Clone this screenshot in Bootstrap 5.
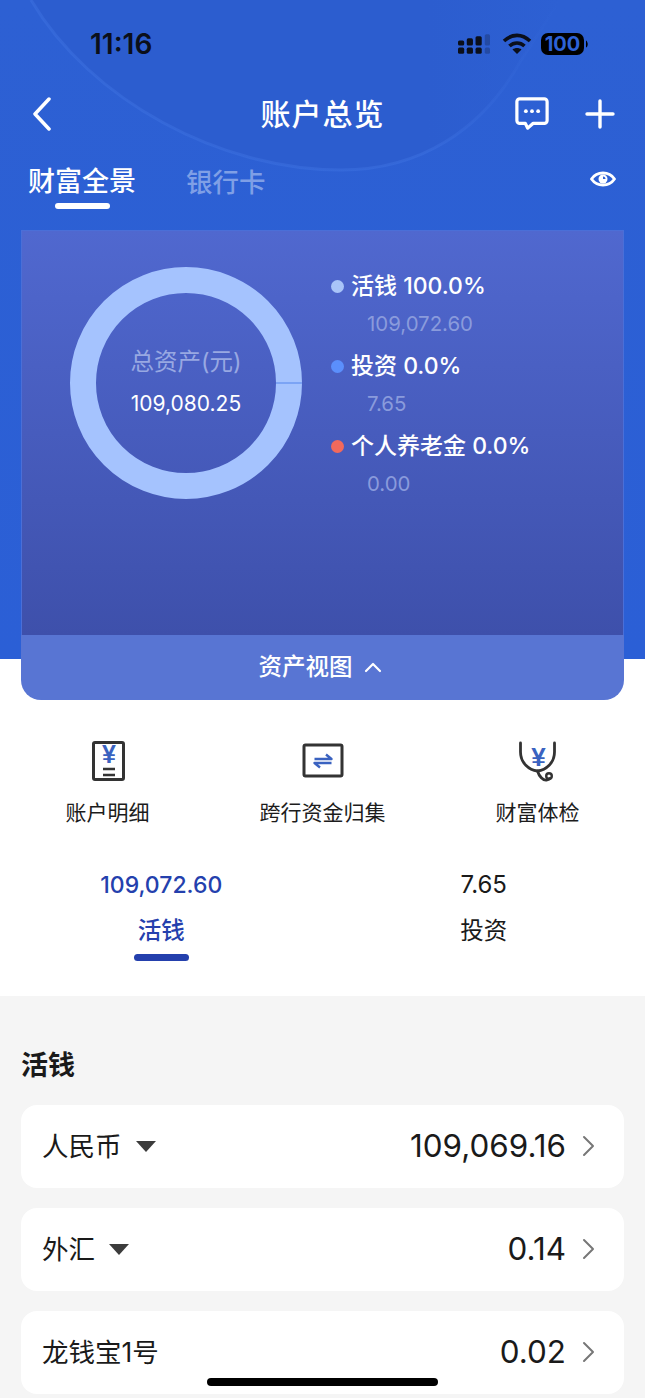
<!DOCTYPE html>
<html lang="zh-CN">
<head>
    <meta charset="UTF-8">
    <meta name="viewport" content="width=device-width, initial-scale=1.0">
    <title>账户总览</title>
    <link href="https://cdn.jsdelivr.net/npm/bootstrap@5.3.0/dist/css/bootstrap.min.css" rel="stylesheet">
    <style>
        body {
            background-color: #f5f5f5;
            font-family: Inter, "Noto Sans CJK SC", sans-serif;
            color: #1a1a1a;
        }
        .phone {
            width: 645px;
            height: 1398px;
            overflow: hidden;
        }
        .hero {
            height: 659px;
            background: linear-gradient(180deg, #2d60d3 0%, #2b5fd6 100%);
        }
        .hero-curve {
            position: absolute;
            left: 0;
            top: 0;
        }
        .status-line {
            height: 88px;
            padding: 0 56px 0 90px;
        }
        .clock {
            font-size: 28px;
            font-weight: 600;
            color: #0b0f1a;
        }
        .wifi-mark {
            margin-left: 10px;
        }
        .top-bar {
            height: 52px;
            padding: 0 30px 0 33px;
        }
        .top-title {
            font-size: 30px;
            font-weight: 500;
            letter-spacing: 1px;
            color: #fff;
        }
        .top-bar-center {
            left: 0;
            right: 0;
            top: 0;
            bottom: 0;
            position: absolute;
        }
        .plus-mark {
            margin-left: 36px;
        }
        .tab-line {
            height: 90px;
            padding: 0 29px 0 28px;
        }
        .tab-on {
            font-size: 27px;
            font-weight: 500;
            line-height: 40px;
            color: #fff;
        }
        .tab-on::after {
            content: "";
            display: block;
            width: 55px;
            height: 6px;
            margin: 1px auto 0;
            background: #fff;
            border-radius: 3px;
        }
        .tab-off {
            font-size: 26.5px;
            font-weight: 500;
            line-height: 40px;
            margin-left: 50px;
            color: #7f9fe6;
        }
        .tab-holder {
            margin-top: 22px;
        }
        .eye-holder {
            margin-top: 28px;
        }
        .wealth-panel {
            margin: 0 21px;
            height: 470px;
            border-radius: 0 0 20px 20px;
            overflow: hidden;
        }
        .wealth-body {
            height: 405px;
            padding: 36px 0 0 48px;
            background: linear-gradient(180deg, #5068cf 0%, #3e50ab 100%);
            border: 1px solid #4a6fd8;
            border-bottom: 0;
        }
        .wealth-foot {
            height: 65px;
            padding: 0 5px 2px 0;
            background: #5875d3;
            color: #fff;
            font-size: 23.5px;
            font-weight: 500;
        }
        .foot-arrow {
            margin-left: 11px;
        }
        .donut {
            width: 232px;
            height: 232px;
        }
        .donut-label {
            position: absolute;
            left: 0;
            right: 0;
            top: 77px;
            text-align: center;
        }
        .donut-name {
            font-size: 23.5px;
            line-height: 36px;
            color: #98a8e2;
        }
        .donut-sum {
            font-size: 21px;
            line-height: 40px;
            margin-top: 4px;
            color: #fff;
        }
        .share-list {
            margin-top: 1px;
            margin-left: 29px;
        }
        .share-row {
            font-size: 23px;
            line-height: 36px;
            color: #fff;
            font-weight: 500;
        }
        .share-dot {
            width: 13px;
            height: 13px;
            border-radius: 50%;
            margin-right: 7px;
        }
        .share-sum {
            font-size: 20.4px;
            line-height: 39px;
            margin: 0 0 5px 36px;
            color: #8a9bdc;
        }
        .white-zone {
            height: 337px;
            padding-top: 78px;
            background: #fff;
        }
        .tool-ico {
            height: 48px;
        }
        .tool-name {
            font-size: 21px;
            line-height: 32px;
            margin-top: 12px;
            color: #1c1c1c;
        }
        .sub-tabs {
            margin-top: 38px;
        }
        .sub-sum {
            font-size: 24px;
            line-height: 36px;
        }
        .sub-name {
            font-size: 23.5px;
            line-height: 36px;
            margin-top: 10px;
        }
        .sub-on {
            color: #2440ad;
            font-weight: 500;
        }
        .sub-on .sub-sum {
            font-size: 23px;
        }
        .sub-on .sub-name::after {
            content: "";
            display: block;
            width: 55px;
            height: 7px;
            margin: 5px auto 0;
            background: #2440ad;
            border-radius: 4px;
        }
        .grey-zone {
            padding: 50px 21px 0;
        }
        .zone-title {
            font-size: 27px;
            font-weight: 700;
            line-height: 40px;
            margin-bottom: 19px;
        }
        .money-row {
            height: 83px;
            padding: 0 28px 0 21px;
            margin-bottom: 20px;
            border: 0;
            border-radius: 16px;
        }
        .money-name {
            font-size: 26.5px;
        }
        .money-sum {
            font-size: 31.4px;
            color: #1a1a1a;
            margin-right: 16px;
        }
        .caret-down {
            width: 0;
            height: 0;
            margin-left: 14px;
            border-left: 10px solid transparent;
            border-right: 10px solid transparent;
            border-top: 11px solid #3c3c3c;
        }
        .home-pill {
            position: absolute;
            left: 207px;
            top: 1378px;
            width: 231px;
            height: 8px;
            background: #000;
            border-radius: 4px;
        }
    </style>
</head>
<body>

<div class="phone position-relative">

    <div class="hero position-relative">
        <svg class="hero-curve" width="645" height="230" viewBox="0 0 645 230">
            <defs>
                <linearGradient id="curveFill" x1="0" y1="0" x2="1" y2="0">
                    <stop offset="0.75" stop-color="#2c5dcf"/>
                    <stop offset="1" stop-color="#2c5dcf" stop-opacity="0"/>
                </linearGradient>
                <linearGradient id="curveEdge" x1="0" y1="0" x2="1" y2="0">
                    <stop offset="0.75" stop-color="#3f73e2" stop-opacity=".45"/>
                    <stop offset="1" stop-color="#3f73e2" stop-opacity="0"/>
                </linearGradient>
            </defs>
            <path d="M31 0C90 100 220 170 341 170C420 170 482 130 520 62L560 0Z" fill="url(#curveFill)"/>
            <path d="M31 0C90 100 220 170 341 170C420 170 482 130 520 62L560 0" fill="none" stroke="url(#curveEdge)" stroke-width="3"/>
        </svg>

        <div class="status-line d-flex align-items-center justify-content-between position-relative">
            <span class="clock">11:16</span>
            <div class="d-flex align-items-center">
                <svg width="33" height="20" viewBox="0 0 32 19" fill="#0b0f1a">
                    <rect x="0" y="6" width="6" height="5" rx="1.5"/><rect x="0" y="13" width="6" height="6" rx="1.5"/>
                    <rect x="8.500" y="4" width="6" height="7" rx="1.500"/><rect x="8.500" y="13" width="6" height="6" rx="1.500"/>
                    <rect x="17" y="2" width="6" height="9" rx="1.500"/><rect x="17" y="13" width="6" height="6" rx="1.500"/>
                    <rect x="26" y="0" width="5" height="11" rx="1.500" opacity=".25"/><rect x="26" y="13" width="5" height="6" rx="1.500" opacity=".25"/>
                </svg>
                <svg class="wifi-mark" width="32" height="22" viewBox="0 0 32 22" fill="none" stroke="#0b0f1a" stroke-width="3.600">
                    <path d="M3 8C11 0.500 21 0.500 29 8"/>
                    <path d="M8.500 13C13 9 19 9 23.500 13"/>
                    <path d="M16 21L11.500 16.500C14 14.500 18 14.500 20.500 16.500Z" fill="#0b0f1a" stroke="none"/>
                </svg>
                <svg class="ms-2" width="48" height="22" viewBox="0 0 48 22">
                    <rect width="43" height="22" rx="7" fill="#000"/>
                    <path d="M45 7.500C47 8.500 47.500 13.500 45 14.500Z" fill="#000"/>
                    <text x="21.500" y="18" text-anchor="middle" font-family="Inter, sans-serif" font-size="20" font-weight="700" fill="#2d62d6">100</text>
                </svg>
            </div>
        </div>

        <div class="top-bar d-flex align-items-center justify-content-between position-relative">
            <div class="top-bar-center d-flex align-items-center justify-content-center">
                <span class="top-title">账户总览</span>
            </div>
            <svg class="position-relative" width="18" height="34" viewBox="0 0 18 34" fill="none" stroke="#fff" stroke-width="3.500" stroke-linecap="round" stroke-linejoin="round">
                <path d="M16 2L2 17L16 32"/>
            </svg>
            <div class="d-flex align-items-center position-relative">
                <svg width="34" height="34" viewBox="0 0 36 36" fill="none">
                    <path d="M5 2H31A3 3 0 0 1 34 5V25A3 3 0 0 1 31 28H19L13.500 33L11 28H5A3 3 0 0 1 2 25V5A3 3 0 0 1 5 2Z" stroke="#fff" stroke-width="3.400" stroke-linejoin="round"/>
                    <circle cx="11.500" cy="15" r="2" fill="#fff"/><circle cx="18" cy="15" r="2" fill="#fff"/><circle cx="24.500" cy="15" r="2" fill="#fff"/>
                </svg>
                <svg class="plus-mark" width="30" height="30" viewBox="0 0 30 30" stroke="#fff" stroke-width="3.400" stroke-linecap="round">
                    <path d="M15 2V28M2 15H28"/>
                </svg>
            </div>
        </div>

        <div class="tab-line d-flex justify-content-between position-relative">
            <div class="d-flex tab-holder">
                <div class="tab-on">财富全景</div>
                <div class="tab-off">银行卡</div>
            </div>
            <svg class="eye-holder" width="26" height="22" viewBox="0 0 26 22" fill="none">
                <path d="M1.500 11C7 3 19 3 24.500 11C19 19 7 19 1.500 11Z" stroke="#fff" stroke-width="2.800" stroke-linejoin="round"/>
                <circle cx="13" cy="11" r="4.500" fill="#fff"/>
                <path d="M13 11V8.500A2.500 2.500 0 0 1 15.500 11Z" fill="#2d62d8"/>
            </svg>
        </div>

        <div class="wealth-panel position-relative">
            <div class="wealth-body d-flex">
                <div class="donut position-relative flex-shrink-0">
                    <svg width="232" height="232" viewBox="0 0 232 232" fill="none">
                        <circle cx="116" cy="116" r="103" stroke="#a5c3fe" stroke-width="26"/>
                        <path d="M206 116H232" stroke="#6f9af2" stroke-width="1.500"/>
                    </svg>
                    <div class="donut-label">
                        <div class="donut-name">总资产(元)</div>
                        <div class="donut-sum">109,080.25</div>
                    </div>
                </div>
                <div class="share-list">
                    <div class="share-row d-flex align-items-center"><span class="share-dot" style="background:#a9c4f8"></span>活钱 100.0%</div>
                    <div class="share-sum">109,072.60</div>
                    <div class="share-row d-flex align-items-center"><span class="share-dot" style="background:#5b8ffc"></span>投资 0.0%</div>
                    <div class="share-sum">7.65</div>
                    <div class="share-row d-flex align-items-center"><span class="share-dot" style="background:#f2695c"></span>个人养老金 0.0%</div>
                    <div class="share-sum">0.00</div>
                </div>
            </div>
            <div class="wealth-foot d-flex align-items-center justify-content-center">
                资产视图
                <svg class="foot-arrow" width="18" height="12" viewBox="0 0 18 12" fill="none" stroke="#fff" stroke-width="2.200" stroke-linecap="round" stroke-linejoin="round">
                    <path d="M2 10L9 3L16 10"/>
                </svg>
            </div>
        </div>
    </div>

    <div class="white-zone">
        <div class="row g-0 text-center">
            <div class="col-4">
                <div class="tool-ico d-flex align-items-center justify-content-center">
                    <svg width="38" height="44" viewBox="0 0 38 44" fill="none">
                        <rect x="4.500" y="3.500" width="30" height="37" rx="1.500" stroke="#333" stroke-width="3"/>
                        <text x="20" y="24" text-anchor="middle" font-family="Liberation Sans, sans-serif" font-weight="700" font-size="25" fill="#3a62c0">¥</text>
                        <path d="M14 30H26M14 36H26" stroke="#333" stroke-width="2.400"/>
                    </svg>
                </div>
                <div class="tool-name">账户明细</div>
            </div>
            <div class="col-4">
                <div class="tool-ico d-flex align-items-center justify-content-center">
                    <svg width="42" height="36" viewBox="0 0 42 36" fill="none">
                        <rect x="2" y="2" width="38" height="31" rx="1.500" stroke="#333" stroke-width="3"/>
                        <path d="M12.500 16H29.500L24 11.500M29.500 20H12.500L18 24.500" stroke="#3a62c0" stroke-width="2.400" stroke-linejoin="round"/>
                    </svg>
                </div>
                <div class="tool-name">跨行资金归集</div>
            </div>
            <div class="col-4">
                <div class="tool-ico d-flex align-items-center justify-content-center">
                    <svg width="40" height="42" viewBox="0 0 40 42" fill="none" stroke="#333" stroke-width="2.800" stroke-linecap="round">
                        <path d="M2.500 3V12C2.500 23 11 30 19.500 31C28 30 36.500 23 36.500 12V3"/>
                        <path d="M19.500 31C21 36 25 41 29 40C30.500 39.500 31.500 39 32 38.500"/>
                        <circle cx="31" cy="36" r="2.800" stroke-width="2.400"/>
                        <text x="20.500" y="26" text-anchor="middle" font-family="Liberation Sans, sans-serif" font-weight="700" font-size="26" fill="#3a62c0" stroke="none">¥</text>
                    </svg>
                </div>
                <div class="tool-name">财富体检</div>
            </div>
        </div>

        <div class="row g-0 text-center sub-tabs">
            <div class="col-6 sub-on">
                <div class="sub-sum">109,072.60</div>
                <div class="sub-name">活钱</div>
            </div>
            <div class="col-6">
                <div class="sub-sum">7.65</div>
                <div class="sub-name">投资</div>
            </div>
        </div>
    </div>

    <div class="grey-zone">
        <div class="zone-title">活钱</div>
        <div class="card money-row flex-row align-items-center justify-content-between">
            <div class="d-flex align-items-center"><span class="money-name">人民币</span><span class="caret-down"></span></div>
            <div class="d-flex align-items-center">
                <span class="money-sum">109,069.16</span>
                <svg width="14" height="22" viewBox="0 0 14 22" fill="none" stroke="#777" stroke-width="2" stroke-linecap="round" stroke-linejoin="round"><path d="M2 2L11 11L2 20"/></svg>
            </div>
        </div>
        <div class="card money-row flex-row align-items-center justify-content-between">
            <div class="d-flex align-items-center"><span class="money-name">外汇</span><span class="caret-down"></span></div>
            <div class="d-flex align-items-center">
                <span class="money-sum">0.14</span>
                <svg width="14" height="22" viewBox="0 0 14 22" fill="none" stroke="#777" stroke-width="2" stroke-linecap="round" stroke-linejoin="round"><path d="M2 2L11 11L2 20"/></svg>
            </div>
        </div>
        <div class="card money-row flex-row align-items-center justify-content-between">
            <span class="money-name">龙钱宝1号</span>
            <div class="d-flex align-items-center">
                <span class="money-sum">0.02</span>
                <svg width="14" height="22" viewBox="0 0 14 22" fill="none" stroke="#777" stroke-width="2" stroke-linecap="round" stroke-linejoin="round"><path d="M2 2L11 11L2 20"/></svg>
            </div>
        </div>
    </div>

    <div class="home-pill"></div>
</div>

<script src="https://cdn.jsdelivr.net/npm/bootstrap@5.3.0/dist/js/bootstrap.bundle.min.js"></script>
</body>
</html>
